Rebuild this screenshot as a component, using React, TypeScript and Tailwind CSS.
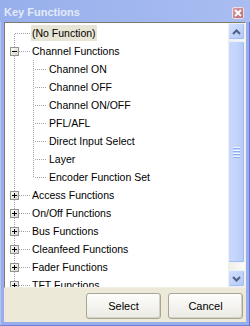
import React from "react";

type Row = {
  label: string;
  level: 0 | 1;
  box?: "plus" | "minus";
  selected?: boolean;
  first?: boolean;
  lastChild?: boolean;
};

const rows: Row[] = [
  { label: "(No Function)", level: 0, selected: true, first: true },
  { label: "Channel Functions", level: 0, box: "minus" },
  { label: "Channel ON", level: 1 },
  { label: "Channel OFF", level: 1 },
  { label: "Channel ON/OFF", level: 1 },
  { label: "PFL/AFL", level: 1 },
  { label: "Direct Input Select", level: 1 },
  { label: "Layer", level: 1 },
  { label: "Encoder Function Set", level: 1, lastChild: true },
  { label: "Access Functions", level: 0, box: "plus" },
  { label: "On/Off Functions", level: 0, box: "plus" },
  { label: "Bus Functions", level: 0, box: "plus" },
  { label: "Cleanfeed Functions", level: 0, box: "plus" },
  { label: "Fader Functions", level: 0, box: "plus" },
  { label: "TFT Functions", level: 0, box: "plus" },
];

const DOT = "#A3A3A3";

function Gutter({ row }: { row: Row }) {
  const w = row.level === 0 ? 26 : 43;
  return (
    <svg width={w} height={18} className="block shrink-0" shapeRendering="crispEdges">
      <defs>
        <linearGradient id="bx" x1="0" y1="0" x2="1" y2="1">
          <stop offset="0" stopColor="#FFFFFF" />
          <stop offset="1" stopColor="#D6D2C2" />
        </linearGradient>
      </defs>
      <line x1={9.5} y1={row.first ? 10 : 0} x2={9.5} y2={18} stroke={DOT} strokeDasharray="1 1" />
      {row.level === 0 && !row.box && (
        <line x1={10} y1={9.5} x2={25} y2={9.5} stroke={DOT} strokeDasharray="1 1" />
      )}
      {row.level === 0 && row.box && (
        <>
          <line x1={14} y1={9.5} x2={25} y2={9.5} stroke={DOT} strokeDasharray="1 1" />
          <rect x={5.5} y={5.5} width={8} height={8} fill="url(#bx)" stroke="#8F9596" />
          <line x1={7} y1={9.5} x2={12} y2={9.5} stroke="#000" />
          {row.box === "plus" && <line x1={9.5} y1={7} x2={9.5} y2={12} stroke="#000" />}
        </>
      )}
      {row.level === 1 && (
        <>
          <line x1={28.5} y1={0} x2={28.5} y2={row.lastChild ? 10 : 18} stroke={DOT} strokeDasharray="1 1" />
          <line x1={30} y1={9.5} x2={41} y2={9.5} stroke={DOT} strokeDasharray="1 1" />
        </>
      )}
    </svg>
  );
}

function Arrow({ up }: { up?: boolean }) {
  return (
    <div className="w-[17px] h-[17px] rounded-[2px] border border-[#EAF0FD] bg-gradient-to-br from-[#D2E0FD] to-[#B3C8F5] flex items-center justify-center shadow-[inset_-1px_-1px_0_#A9BEF0]">
      <svg width="9" height="6" viewBox="0 0 9 6">
        <path
          d={up ? "M1 5 L4.5 1.5 L8 5" : "M1 1 L4.5 4.5 L8 1"}
          fill="none"
          stroke="#4D6185"
          strokeWidth="2"
        />
      </svg>
    </div>
  );
}

function Scrollbar() {
  return (
    <div className="w-[17px] shrink-0 flex flex-col bg-gradient-to-r from-[#EFEEE6] to-[#FCFCF9]">
      <Arrow up />
      <div className="flex-1 flex flex-col pt-[1px]">
        <div className="h-[222px] rounded-[2px] border border-[#EAF0FD] bg-gradient-to-r from-[#C9D8FC] via-[#C3D4FB] to-[#B6CAF6] shadow-[inset_-1px_-1px_0_#A6BCF1] flex flex-col items-center justify-center gap-[1px]">
          {[0, 1, 2, 3].map((i) => (
            <div key={i} className="flex flex-col">
              <div className="w-[7px] h-[1px] bg-[#EEF4FF]" />
              <div className="w-[7px] h-[1px] bg-[#8DAEF3]" />
            </div>
          ))}
        </div>
      </div>
      <Arrow />
    </div>
  );
}

export default function App() {
  return (
    <div className="w-[250px] h-[326px] flex flex-col bg-[#98AEEC] shadow-[inset_-1px_0_0_#6376D5,inset_0_-1px_0_#6E80D8,inset_1px_0_0_#B3C4F2] font-['Liberation_Sans',Arial,sans-serif] overflow-hidden">
      <div className="h-[22px] shrink-0 flex items-start justify-between bg-gradient-to-r from-[#97AFEB] to-[#A9BDF1]">
        <span className="mt-[6px] ml-[4px] text-[11px] leading-[13px] font-bold text-[#E3EAFA]">
          Key Functions
        </span>
        <div className="mt-[7px] mr-[6px] w-[12px] h-[12px] rounded-[2px] border border-[#F2DCE0] bg-gradient-to-br from-[#D69DA6] to-[#B46B79] flex items-center justify-center">
          <svg width="8" height="8" viewBox="0 0 8 8">
            <path d="M1 1 L7 7 M7 1 L1 7" stroke="#FFFFFF" strokeWidth="1.8" />
          </svg>
        </div>
      </div>
      <div className="flex-1 flex flex-col mx-[4px] mb-[4px] bg-[#ECE9D8]">
        <div className="h-[266px] shrink-0 flex border-t border-l border-[#7F7C6E] border-r border-b border-r-[#F1EFE2] border-b-[#F1EFE2] bg-white">
          <div className="flex-1 overflow-hidden pt-[1px]">
            {rows.map((r) => (
              <div key={r.label} className="h-[18px] flex items-center">
                <Gutter row={r} />
                <span
                  className={
                    "h-[16px] leading-[16px] px-[1px] text-[10.5px] text-black whitespace-nowrap " +
                    (r.selected ? "bg-[#E8E5D4]" : "")
                  }
                >
                  {r.label}
                </span>
              </div>
            ))}
          </div>
          <Scrollbar />
        </div>
        <div className="flex-1 flex justify-end items-start gap-[7px] pt-[5px] pr-[3px]">
          <button className="w-[75px] h-[26px] rounded-[3px] border border-[#A7A595] bg-gradient-to-b from-[#FDFDFC] to-[#EBEAE3] shadow-[inset_-1px_-1px_0_#D5D1C4] text-[11px] text-black">
            Select
          </button>
          <button className="w-[75px] h-[26px] rounded-[3px] border border-[#A7A595] bg-gradient-to-b from-[#FDFDFC] to-[#EBEAE3] shadow-[inset_-1px_-1px_0_#D5D1C4] text-[11px] text-black">
            Cancel
          </button>
        </div>
      </div>
    </div>
  );
}
